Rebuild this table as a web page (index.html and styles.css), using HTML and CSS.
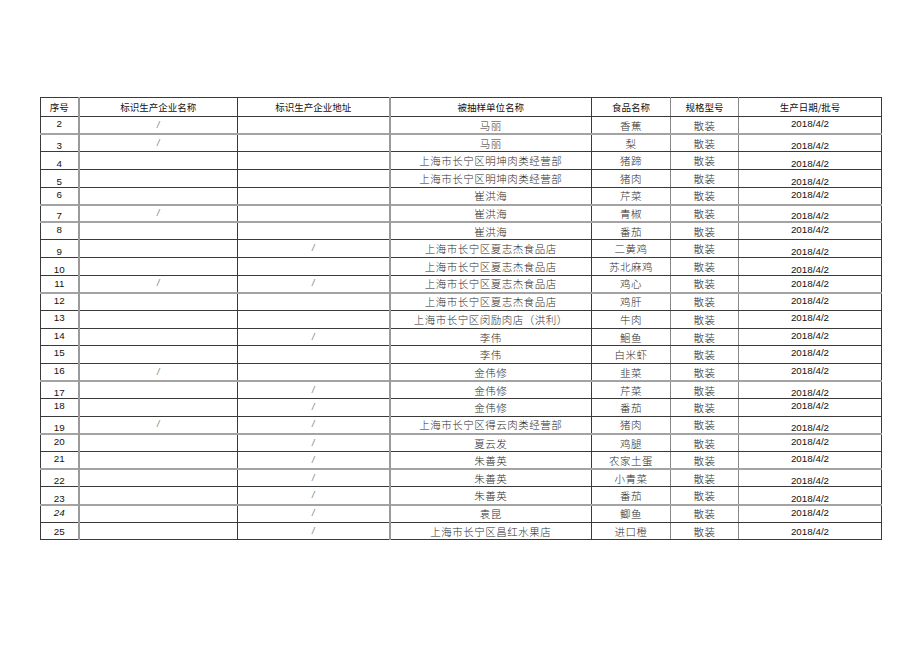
FILE: index.html
```html
<!DOCTYPE html>
<html lang="zh-CN">
<head>
<meta charset="utf-8">
<title>抽样表</title>
<link rel="stylesheet" href="styles.css">
</head>
<body>
<div class="page">
<table class="sheet">
<colgroup>
<col class="c1"><col class="c2"><col class="c3"><col class="c4"><col class="c5"><col class="c6"><col class="c7">
</colgroup>
<thead>
<tr class="head">
<th class="v1">序号</th><th>标识生产企业名称</th><th class="v3">标识生产企业地址</th><th>被抽样单位名称</th><th class="v5">食品名称</th><th class="v6">规格型号</th><th>生产日期/批号</th>
</tr>
</thead>
<tbody>
<tr class="top"><td class="n v1">2</td><td class="s">/</td><td class="s v3"></td><td class="z">马丽</td><td class="z v5">香蕉</td><td class="z v6">散装</td><td class="d">2018/4/2</td></tr>
<tr class="bot g"><td class="n v1">3</td><td class="s">/</td><td class="s v3"></td><td class="z">马丽</td><td class="z v5">梨</td><td class="z v6">散装</td><td class="d">2018/4/2</td></tr>
<tr class="bot"><td class="n v1">4</td><td class="s"></td><td class="s v3"></td><td class="z">上海市长宁区明坤肉类经营部</td><td class="z v5">猪蹄</td><td class="z v6">散装</td><td class="d">2018/4/2</td></tr>
<tr class="bot"><td class="n v1">5</td><td class="s"></td><td class="s v3"></td><td class="z">上海市长宁区明坤肉类经营部</td><td class="z v5">猪肉</td><td class="z v6">散装</td><td class="d">2018/4/2</td></tr>
<tr class="top"><td class="n v1">6</td><td class="s"></td><td class="s v3"></td><td class="z">崔洪海</td><td class="z v5">芹菜</td><td class="z v6">散装</td><td class="d">2018/4/2</td></tr>
<tr class="bot g"><td class="n v1">7</td><td class="s">/</td><td class="s v3"></td><td class="z">崔洪海</td><td class="z v5">青椒</td><td class="z v6">散装</td><td class="d">2018/4/2</td></tr>
<tr class="top g"><td class="n v1">8</td><td class="s"></td><td class="s v3"></td><td class="z">崔洪海</td><td class="z v5">番茄</td><td class="z v6">散装</td><td class="d">2018/4/2</td></tr>
<tr class="bot"><td class="n v1">9</td><td class="s"></td><td class="s v3">/</td><td class="z">上海市长宁区夏志杰食品店</td><td class="z v5">二黄鸡</td><td class="z v6">散装</td><td class="d">2018/4/2</td></tr>
<tr class="bot"><td class="n v1">10</td><td class="s"></td><td class="s v3"></td><td class="z">上海市长宁区夏志杰食品店</td><td class="z v5">苏北麻鸡</td><td class="z v6">散装</td><td class="d">2018/4/2</td></tr>
<tr class="mid"><td class="n v1">11</td><td class="s">/</td><td class="s v3">/</td><td class="z">上海市长宁区夏志杰食品店</td><td class="z v5">鸡心</td><td class="z v6">散装</td><td class="d">2018/4/2</td></tr>
<tr class="top g"><td class="n v1">12</td><td class="s"></td><td class="s v3"></td><td class="z">上海市长宁区夏志杰食品店</td><td class="z v5">鸡肝</td><td class="z v6">散装</td><td class="d">2018/4/2</td></tr>
<tr class="top"><td class="n v1">13</td><td class="s"></td><td class="s v3"></td><td class="z">上海市长宁区闵励肉店（洪利）</td><td class="z v5">牛肉</td><td class="z v6">散装</td><td class="d">2018/4/2</td></tr>
<tr class="top"><td class="n v1">14</td><td class="s"></td><td class="s v3">/</td><td class="z">李伟</td><td class="z v5">鮰鱼</td><td class="z v6">散装</td><td class="d">2018/4/2</td></tr>
<tr class="top"><td class="n v1">15</td><td class="s"></td><td class="s v3"></td><td class="z">李伟</td><td class="z v5">白米虾</td><td class="z v6">散装</td><td class="d">2018/4/2</td></tr>
<tr class="top"><td class="n v1">16</td><td class="s">/</td><td class="s v3"></td><td class="z">金伟修</td><td class="z v5">韭菜</td><td class="z v6">散装</td><td class="d">2018/4/2</td></tr>
<tr class="bot g"><td class="n v1">17</td><td class="s"></td><td class="s v3">/</td><td class="z">金伟修</td><td class="z v5">芹菜</td><td class="z v6">散装</td><td class="d">2018/4/2</td></tr>
<tr class="top"><td class="n v1">18</td><td class="s"></td><td class="s v3">/</td><td class="z">金伟修</td><td class="z v5">番茄</td><td class="z v6">散装</td><td class="d">2018/4/2</td></tr>
<tr class="bot"><td class="n v1">19</td><td class="s">/</td><td class="s v3">/</td><td class="z">上海市长宁区得云肉类经营部</td><td class="z v5">猪肉</td><td class="z v6">散装</td><td class="d">2018/4/2</td></tr>
<tr class="top g"><td class="n v1">20</td><td class="s"></td><td class="s v3">/</td><td class="z">夏云发</td><td class="z v5">鸡腿</td><td class="z v6">散装</td><td class="d">2018/4/2</td></tr>
<tr class="top"><td class="n v1">21</td><td class="s"></td><td class="s v3">/</td><td class="z">朱善英</td><td class="z v5">农家土蛋</td><td class="z v6">散装</td><td class="d">2018/4/2</td></tr>
<tr class="bot g"><td class="n v1">22</td><td class="s"></td><td class="s v3">/</td><td class="z">朱善英</td><td class="z v5">小青菜</td><td class="z v6">散装</td><td class="d">2018/4/2</td></tr>
<tr class="bot"><td class="n v1">23</td><td class="s"></td><td class="s v3">/</td><td class="z">朱善英</td><td class="z v5">番茄</td><td class="z v6">散装</td><td class="d">2018/4/2</td></tr>
<tr class="top g"><td class="n v1 it">24</td><td class="s"></td><td class="s v3">/</td><td class="z">袁昆</td><td class="z v5">鲫鱼</td><td class="z v6">散装</td><td class="d">2018/4/2</td></tr>
<tr class="mid"><td class="n v1">25</td><td class="s"></td><td class="s v3">/</td><td class="z">上海市长宁区昌红水果店</td><td class="z v5">进口橙</td><td class="z v6">散装</td><td class="d">2018/4/2</td></tr>
</tbody>
</table>
</div>
</body>
</html>
```
FILE: styles.css
```css
html, body {
  margin: 0;
  padding: 0;
  background: #ffffff;
}

.page {
  padding: 97px 0 0 40px;
}

.sheet {
  border-collapse: collapse;
  table-layout: fixed;
  width: 841px;
  color: #1a1a1a;
}

.c1 { width: 38px; }
.c2 { width: 159px; }
.c3 { width: 152px; }
.c4 { width: 202px; }
.c5 { width: 79px; }
.c6 { width: 68px; }
.c7 { width: 143px; }

.sheet th,
.sheet td {
  border: 1px solid #3a3a3a;
  padding: 0;
  text-align: center;
  white-space: nowrap;
  overflow: hidden;
}

.sheet .v1,
.sheet .v3 {
  border-right: 2px solid #9a9a9a;
}
.sheet .v5,
.sheet .v6 {
  border-right: 1px solid #888;
}

.head {
  height: 19px;
}

.head th {
  font-family: "Noto Sans CJK SC", "Noto Sans", sans-serif;
  font-weight: 400;
  font-size: 9.5px;
  line-height: 12px;
  color: #111;
  vertical-align: middle;
}

tbody tr {
  height: 17.65px;
}

tbody tr.g td {
  border-top: 2px solid #a3a3a3;
}

.n,
.d {
  font-family: "Liberation Sans", Arial, sans-serif;
  font-size: 9.8px;
  line-height: 11px;
  color: #111;
}

.it {
  font-style: italic;
}

.top .n,
.top .d {
  vertical-align: top;
  padding-top: 1px;
}

.bot .n,
.bot .d {
  vertical-align: bottom;
}

.mid .n,
.mid .d {
  vertical-align: middle;
}

.z {
  font-family: "Noto Sans CJK SC", sans-serif;
  font-weight: 300;
  font-size: 10.5px;
  line-height: 13px;
  letter-spacing: 0.5px;
  color: #2c2c2c;
  vertical-align: middle;
}

.s {
  font-family: "Liberation Sans", sans-serif;
  font-style: italic;
  font-size: 9px;
  line-height: 11px;
  color: #777;
  vertical-align: middle;
}
```
